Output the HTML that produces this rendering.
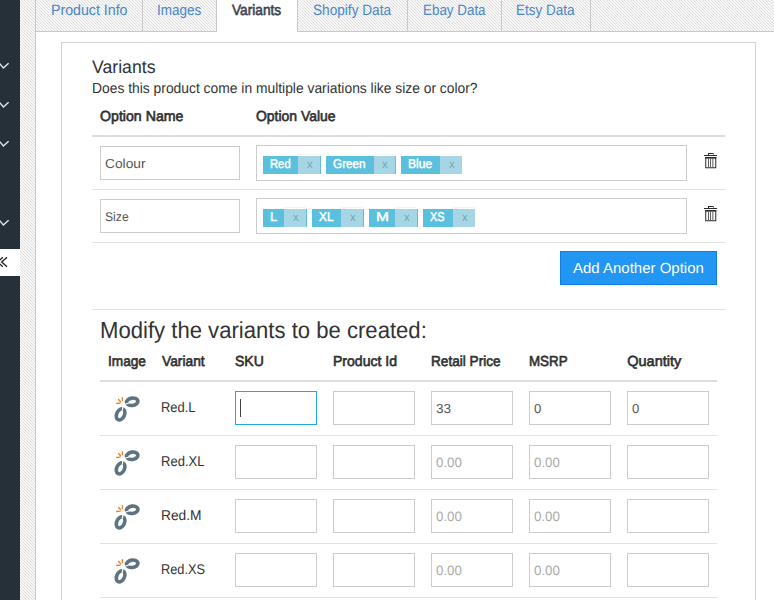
<!DOCTYPE html><html><head><meta charset="utf-8"><style>
html,body{margin:0;padding:0;width:774px;height:600px;overflow:hidden;}
body{position:relative;font-family:"Liberation Sans",sans-serif;color:#333;background:#ececec;}
.a{position:absolute;white-space:nowrap;}
.t{position:absolute;white-space:nowrap;text-rendering:geometricPrecision;}
.box{position:absolute;box-sizing:border-box;}
</style></head><body>
<svg class="a" style="left:0;top:0" width="774" height="600"><defs><pattern id="h" width="3" height="3" patternUnits="userSpaceOnUse"><rect width="3" height="3" fill="#f8f8f8"/><rect x="0" y="0" width="1" height="1" fill="#dedede"/><rect x="1" y="1" width="1" height="1" fill="#dedede"/><rect x="2" y="2" width="1" height="1" fill="#dedede"/></pattern></defs><rect width="774" height="600" fill="url(#h)"/></svg>
<div class="a" style="left:0;top:0;width:20px;height:600px;background:#263038"></div>
<svg class="a" style="left:0;top:62px" width="10" height="8"><polyline points="-0.3,1.6 3.4,6.0 8.6,1.2" fill="none" stroke="#e6e6e6" stroke-width="1.45"/></svg>
<svg class="a" style="left:0;top:101px" width="10" height="8"><polyline points="-0.3,1.6 3.4,6.0 8.6,1.2" fill="none" stroke="#e6e6e6" stroke-width="1.45"/></svg>
<svg class="a" style="left:0;top:140px" width="10" height="8"><polyline points="-0.3,1.6 3.4,6.0 8.6,1.2" fill="none" stroke="#e6e6e6" stroke-width="1.45"/></svg>
<svg class="a" style="left:0;top:219px" width="10" height="8"><polyline points="-0.3,1.6 3.4,6.0 8.6,1.2" fill="none" stroke="#e6e6e6" stroke-width="1.45"/></svg>
<div class="a" style="left:0;top:249px;width:20px;height:27px;background:#fff"></div>
<svg class="a" style="left:0;top:255px" width="12" height="14"><polyline points="2.8,2.3 -2.5,7 2.8,11.7" fill="none" stroke="#1c2228" stroke-width="1.35"/><polyline points="7,2.3 1.7,7 7,11.7" fill="none" stroke="#1c2228" stroke-width="1.35"/></svg>
<div class="box" style="left:35px;top:31px;width:739px;height:569px;background:#fff;border-left:1px solid #c9c9c9;border-top:1px solid #c9c9c9"></div>
<div class="box" style="left:35px;top:-5px;width:108px;height:37px;border:1px solid #c9c9c9;background:transparent"></div>
<div class="box" style="left:142px;top:-5px;width:75px;height:37px;border:1px solid #c9c9c9;background:transparent"></div>
<div class="box" style="left:216px;top:-5px;width:82px;height:37px;border:1px solid #c9c9c9;border-bottom:none;background:#fff"></div>
<div class="box" style="left:297px;top:-5px;width:111px;height:37px;border:1px solid #c9c9c9;background:transparent"></div>
<div class="box" style="left:407px;top:-5px;width:95px;height:37px;border:1px solid #c9c9c9;background:transparent"></div>
<div class="box" style="left:501px;top:-5px;width:90px;height:37px;border:1px solid #c9c9c9;background:transparent"></div>
<div class="t" style="left:51.04px;top:0px;font-size:15.01px;line-height:22px;font-weight:normal;color:#4a86c8;transform:scaleX(0.9460);transform-origin:0 0;">Product Info</div>
<div class="t" style="left:157.15px;top:0px;font-size:15.01px;line-height:22px;font-weight:normal;color:#4a86c8;transform:scaleX(0.9007);transform-origin:0 0;">Images</div>
<div class="t" style="left:232.24px;top:0px;font-size:15.01px;line-height:22px;font-weight:normal;color:#3d4450;transform:scaleX(0.9127);transform-origin:0 0;-webkit-text-stroke:0.6px #3d4450;">Variants</div>
<div class="t" style="left:312.88px;top:0px;font-size:15.01px;line-height:22px;font-weight:normal;color:#4a86c8;transform:scaleX(0.9090);transform-origin:0 0;">Shopify Data</div>
<div class="t" style="left:422.70px;top:0px;font-size:15.01px;line-height:22px;font-weight:normal;color:#4a86c8;transform:scaleX(0.8932);transform-origin:0 0;">Ebay Data</div>
<div class="t" style="left:516.49px;top:0px;font-size:15.01px;line-height:22px;font-weight:normal;color:#4a86c8;transform:scaleX(0.8992);transform-origin:0 0;">Etsy Data</div>
<div class="box" style="left:61px;top:42px;width:695px;height:600px;border:1px solid #d3d3d3;background:#fff"></div>
<div class="t" style="left:92.22px;top:54px;font-size:18.31px;line-height:26px;font-weight:normal;color:#333;transform:scaleX(0.9650);transform-origin:0 0;">Variants</div>
<div class="t" style="left:91.61px;top:79px;font-size:14.54px;line-height:21px;font-weight:normal;color:#333;transform:scaleX(0.9529);transform-origin:0 0;">Does this product come in multiple variations like size or color?</div>
<div class="t" style="left:100.33px;top:107px;font-size:14.54px;line-height:21px;font-weight:normal;color:#2f2f2f;transform:scaleX(0.9748);transform-origin:0 0;-webkit-text-stroke:0.6px #2f2f2f;">Option Name</div>
<div class="t" style="left:255.94px;top:107px;font-size:14.54px;line-height:21px;font-weight:normal;color:#2f2f2f;transform:scaleX(0.9597);transform-origin:0 0;-webkit-text-stroke:0.6px #2f2f2f;">Option Value</div>
<div class="a" style="left:92px;top:135px;width:633px;height:2px;background:#dddddd"></div>
<div class="a" style="left:92px;top:189px;width:633px;height:1px;background:#e2e2e2"></div>
<div class="a" style="left:92px;top:242px;width:633px;height:1px;background:#e2e2e2"></div>
<div class="box" style="left:100px;top:146px;width:140px;height:34px;border:1px solid #cccccc;background:#fff"></div>
<div class="t" style="left:104.70px;top:154px;font-size:13.08px;line-height:19px;font-weight:normal;color:#555;transform:scaleX(1.0518);transform-origin:0 0;">Colour</div>
<div class="box" style="left:256px;top:145px;width:431px;height:36px;border:1px solid #cccccc;background:#fff"></div>
<div class="box" style="left:100px;top:199px;width:140px;height:34px;border:1px solid #cccccc;background:#fff"></div>
<div class="t" style="left:104.85px;top:208px;font-size:12.65px;line-height:18px;font-weight:normal;color:#555;transform:scaleX(0.9629);transform-origin:0 0;">Size</div>
<div class="box" style="left:256px;top:198px;width:431px;height:36px;border:1px solid #cccccc;background:#fff"></div>
<div class="a" style="left:263px;top:156px;width:35px;height:18px;background:#5bc0de"></div>
<div class="a" style="left:298px;top:156px;width:22px;height:18px;background:#a6d6e5"></div>
<div class="a" style="left:298px;top:154px;width:22px;height:1px;background:#f6f3f3"></div>
<div class="a" style="left:320px;top:156px;width:1px;height:18px;background:#62bcdb"></div>
<div class="t" style="left:270.18px;top:155px;font-size:12.79px;line-height:18px;font-weight:normal;color:#fff;transform:scaleX(0.8801);transform-origin:0 0;-webkit-text-stroke:0.45px #fff;">Red</div>
<div class="t" style="left:306.67px;top:156px;font-size:11.7px;line-height:17px;font-weight:normal;color:#75a6b6;transform:scaleX(0.9655);transform-origin:0 0;">x</div>
<div class="a" style="left:326px;top:156px;width:48px;height:18px;background:#5bc0de"></div>
<div class="a" style="left:374px;top:156px;width:21px;height:18px;background:#a6d6e5"></div>
<div class="a" style="left:374px;top:154px;width:21px;height:1px;background:#f6f3f3"></div>
<div class="a" style="left:395px;top:156px;width:1px;height:18px;background:#62bcdb"></div>
<div class="t" style="left:333.31px;top:155px;font-size:12.79px;line-height:18px;font-weight:normal;color:#fff;transform:scaleX(0.9186);transform-origin:0 0;-webkit-text-stroke:0.45px #fff;">Green</div>
<div class="t" style="left:382.17px;top:156px;font-size:11.7px;line-height:17px;font-weight:normal;color:#75a6b6;transform:scaleX(0.9655);transform-origin:0 0;">x</div>
<div class="a" style="left:401px;top:156px;width:39px;height:18px;background:#5bc0de"></div>
<div class="a" style="left:440px;top:156px;width:22px;height:18px;background:#a6d6e5"></div>
<div class="a" style="left:440px;top:154px;width:22px;height:1px;background:#f6f3f3"></div>
<div class="t" style="left:408.00px;top:155px;font-size:12.79px;line-height:18px;font-weight:normal;color:#fff;transform:scaleX(0.9507);transform-origin:0 0;-webkit-text-stroke:0.45px #fff;">Blue</div>
<div class="t" style="left:448.67px;top:156px;font-size:11.7px;line-height:17px;font-weight:normal;color:#75a6b6;transform:scaleX(0.9655);transform-origin:0 0;">x</div>
<div class="a" style="left:263px;top:209px;width:21px;height:18px;background:#5bc0de"></div>
<div class="a" style="left:284px;top:209px;width:22px;height:18px;background:#a6d6e5"></div>
<div class="a" style="left:284px;top:207px;width:22px;height:1px;background:#f6f3f3"></div>
<div class="a" style="left:306px;top:209px;width:1px;height:18px;background:#62bcdb"></div>
<div class="t" style="left:270.04px;top:208px;font-size:12.79px;line-height:18px;font-weight:normal;color:#fff;transform:scaleX(1.0108);transform-origin:0 0;-webkit-text-stroke:0.45px #fff;">L</div>
<div class="t" style="left:292.67px;top:209px;font-size:11.7px;line-height:17px;font-weight:normal;color:#75a6b6;transform:scaleX(0.9655);transform-origin:0 0;">x</div>
<div class="a" style="left:312px;top:209px;width:29px;height:18px;background:#5bc0de"></div>
<div class="a" style="left:341px;top:209px;width:22px;height:18px;background:#a6d6e5"></div>
<div class="a" style="left:341px;top:207px;width:22px;height:1px;background:#f6f3f3"></div>
<div class="a" style="left:363px;top:209px;width:1px;height:18px;background:#62bcdb"></div>
<div class="t" style="left:319.43px;top:208px;font-size:12.79px;line-height:18px;font-weight:normal;color:#fff;transform:scaleX(0.9309);transform-origin:0 0;-webkit-text-stroke:0.45px #fff;">XL</div>
<div class="t" style="left:349.67px;top:209px;font-size:11.7px;line-height:17px;font-weight:normal;color:#75a6b6;transform:scaleX(0.9655);transform-origin:0 0;">x</div>
<div class="a" style="left:369px;top:209px;width:26px;height:18px;background:#5bc0de"></div>
<div class="a" style="left:395px;top:209px;width:22px;height:18px;background:#a6d6e5"></div>
<div class="a" style="left:395px;top:207px;width:22px;height:1px;background:#f6f3f3"></div>
<div class="a" style="left:417px;top:209px;width:1px;height:18px;background:#62bcdb"></div>
<div class="t" style="left:375.62px;top:208px;font-size:12.79px;line-height:18px;font-weight:normal;color:#fff;transform:scaleX(1.2155);transform-origin:0 0;-webkit-text-stroke:0.45px #fff;">M</div>
<div class="t" style="left:403.67px;top:209px;font-size:11.7px;line-height:17px;font-weight:normal;color:#75a6b6;transform:scaleX(0.9655);transform-origin:0 0;">x</div>
<div class="a" style="left:423px;top:209px;width:30px;height:18px;background:#5bc0de"></div>
<div class="a" style="left:453px;top:209px;width:22px;height:18px;background:#a6d6e5"></div>
<div class="a" style="left:453px;top:207px;width:22px;height:1px;background:#f6f3f3"></div>
<div class="t" style="left:430.16px;top:208px;font-size:12.79px;line-height:18px;font-weight:normal;color:#fff;transform:scaleX(0.8525);transform-origin:0 0;-webkit-text-stroke:0.45px #fff;">XS</div>
<div class="t" style="left:461.67px;top:209px;font-size:11.7px;line-height:17px;font-weight:normal;color:#75a6b6;transform:scaleX(0.9655);transform-origin:0 0;">x</div>
<svg class="a" style="left:703px;top:153px" width="16" height="16" viewBox="0 0 16 16">
<rect x="5.5" y="0.5" width="4.5" height="2" fill="none" stroke="#2a2a2a" stroke-width="1"/>
<rect x="1" y="2" width="13" height="1" fill="#2a2a2a"/>
<rect x="2.75" y="4.5" width="10" height="10.25" fill="none" stroke="#2a2a2a" stroke-width="1"/>
<rect x="2.25" y="4" width="11" height="1.6" fill="#2a2a2a"/>
<rect x="5" y="5.5" width="0.8" height="8.6" fill="#333"/><rect x="7.25" y="5.5" width="0.8" height="8.6" fill="#333"/><rect x="9.5" y="5.5" width="0.8" height="8.6" fill="#333"/>
</svg>
<svg class="a" style="left:703px;top:206px" width="16" height="16" viewBox="0 0 16 16">
<rect x="5.5" y="0.5" width="4.5" height="2" fill="none" stroke="#2a2a2a" stroke-width="1"/>
<rect x="1" y="2" width="13" height="1" fill="#2a2a2a"/>
<rect x="2.75" y="4.5" width="10" height="10.25" fill="none" stroke="#2a2a2a" stroke-width="1"/>
<rect x="2.25" y="4" width="11" height="1.6" fill="#2a2a2a"/>
<rect x="5" y="5.5" width="0.8" height="8.6" fill="#333"/><rect x="7.25" y="5.5" width="0.8" height="8.6" fill="#333"/><rect x="9.5" y="5.5" width="0.8" height="8.6" fill="#333"/>
</svg>
<div class="box" style="left:560px;top:251px;width:157px;height:34px;background:#2196f3;border:1px solid #0f7ee3"></div>
<div class="t" style="left:573.17px;top:259px;font-size:14.68px;line-height:21px;font-weight:normal;color:#fff;transform:scaleX(1.0214);transform-origin:0 0;">Add Another Option</div>
<div class="a" style="left:92px;top:309px;width:633px;height:1px;background:#e2e2e2"></div>
<div class="t" style="left:99.69px;top:314px;font-size:23.26px;line-height:33px;font-weight:normal;color:#333;transform:scaleX(0.9506);transform-origin:0 0;">Modify the variants to be created:</div>
<div class="t" style="left:107.74px;top:352px;font-size:14.54px;line-height:21px;font-weight:normal;color:#2f2f2f;transform:scaleX(0.9395);transform-origin:0 0;-webkit-text-stroke:0.6px #2f2f2f;">Image</div>
<div class="t" style="left:161.64px;top:352px;font-size:14.54px;line-height:21px;font-weight:normal;color:#2f2f2f;transform:scaleX(0.9477);transform-origin:0 0;-webkit-text-stroke:0.6px #2f2f2f;">Variant</div>
<div class="t" style="left:234.76px;top:352px;font-size:14.54px;line-height:21px;font-weight:normal;color:#2f2f2f;transform:scaleX(0.9639);transform-origin:0 0;-webkit-text-stroke:0.6px #2f2f2f;">SKU</div>
<div class="t" style="left:332.65px;top:352px;font-size:14.54px;line-height:21px;font-weight:normal;color:#2f2f2f;transform:scaleX(0.9666);transform-origin:0 0;-webkit-text-stroke:0.6px #2f2f2f;">Product Id</div>
<div class="t" style="left:430.98px;top:352px;font-size:14.54px;line-height:21px;font-weight:normal;color:#2f2f2f;transform:scaleX(0.9365);transform-origin:0 0;-webkit-text-stroke:0.6px #2f2f2f;">Retail Price</div>
<div class="t" style="left:529.10px;top:352px;font-size:14.54px;line-height:21px;font-weight:normal;color:#2f2f2f;transform:scaleX(0.9189);transform-origin:0 0;-webkit-text-stroke:0.6px #2f2f2f;">MSRP</div>
<div class="t" style="left:627.21px;top:352px;font-size:14.54px;line-height:21px;font-weight:normal;color:#2f2f2f;-webkit-text-stroke:0.6px #2f2f2f;">Quantity</div>
<div class="a" style="left:100px;top:380px;width:617px;height:2px;background:#dddddd"></div>
<div class="a" style="left:100px;top:435px;width:617px;height:1px;background:#e2e2e2"></div>
<svg class="a" style="left:110px;top:392px" width="34" height="32" viewBox="0 0 34 32">
<ellipse cx="22.2" cy="9.8" rx="5.75" ry="3.7" transform="rotate(-8 22.2 9.8)" fill="none" stroke="#5e7380" stroke-width="3.6"/>
<ellipse cx="10.6" cy="22.4" rx="3.9" ry="5.85" transform="rotate(25 10.6 22.4)" fill="none" stroke="#5e7380" stroke-width="3.6"/>
<path d="M14.2,12.6 L20.5,10.6" stroke="#fff" stroke-width="1.1"/>
<path d="M12.9,14.6 L11.8,20.8" stroke="#fff" stroke-width="1.1"/>
<path d="M6.7,11.5 L9.9,11.2 M8.6,7.5 L10.6,9.8 M12.3,5.6 L12.5,8.5" stroke="#f47b20" stroke-width="1.3" stroke-linecap="round"/>
</svg>
<div class="t" style="left:160.64px;top:397px;font-size:14.1px;line-height:20px;font-weight:normal;color:#333;transform:scaleX(0.9167);transform-origin:0 0;">Red.L</div>
<div class="box" style="left:235px;top:391px;width:82px;height:34px;border:1px solid #1ea7ea;background:#fff"></div>
<div class="box" style="left:333px;top:391px;width:82px;height:34px;border:1px solid #cccccc;background:#fff"></div>
<div class="box" style="left:431px;top:391px;width:82px;height:34px;border:1px solid #cccccc;background:#fff"></div>
<div class="box" style="left:529px;top:391px;width:82px;height:34px;border:1px solid #cccccc;background:#fff"></div>
<div class="box" style="left:627px;top:391px;width:82px;height:34px;border:1px solid #cccccc;background:#fff"></div>
<div class="a" style="left:240px;top:399px;width:1px;height:18px;background:#444"></div>
<div class="t" style="left:435.88px;top:399px;font-size:13.08px;line-height:19px;font-weight:normal;color:#555;transform:scaleX(1.0389);transform-origin:0 0;">33</div>
<div class="t" style="left:533.89px;top:399px;font-size:13.08px;line-height:19px;font-weight:normal;color:#555;">0</div>
<div class="t" style="left:631.89px;top:399px;font-size:13.08px;line-height:19px;font-weight:normal;color:#555;">0</div>
<div class="a" style="left:100px;top:489px;width:617px;height:1px;background:#e2e2e2"></div>
<svg class="a" style="left:110px;top:446px" width="34" height="32" viewBox="0 0 34 32">
<ellipse cx="22.2" cy="9.8" rx="5.75" ry="3.7" transform="rotate(-8 22.2 9.8)" fill="none" stroke="#5e7380" stroke-width="3.6"/>
<ellipse cx="10.6" cy="22.4" rx="3.9" ry="5.85" transform="rotate(25 10.6 22.4)" fill="none" stroke="#5e7380" stroke-width="3.6"/>
<path d="M14.2,12.6 L20.5,10.6" stroke="#fff" stroke-width="1.1"/>
<path d="M12.9,14.6 L11.8,20.8" stroke="#fff" stroke-width="1.1"/>
<path d="M6.7,11.5 L9.9,11.2 M8.6,7.5 L10.6,9.8 M12.3,5.6 L12.5,8.5" stroke="#f47b20" stroke-width="1.3" stroke-linecap="round"/>
</svg>
<div class="t" style="left:160.63px;top:451px;font-size:14.1px;line-height:20px;font-weight:normal;color:#333;transform:scaleX(0.9250);transform-origin:0 0;">Red.XL</div>
<div class="box" style="left:235px;top:445px;width:82px;height:34px;border:1px solid #cccccc;background:#fff"></div>
<div class="box" style="left:333px;top:445px;width:82px;height:34px;border:1px solid #cccccc;background:#fff"></div>
<div class="box" style="left:431px;top:445px;width:82px;height:34px;border:1px solid #cccccc;background:#fff"></div>
<div class="box" style="left:529px;top:445px;width:82px;height:34px;border:1px solid #cccccc;background:#fff"></div>
<div class="box" style="left:627px;top:445px;width:82px;height:34px;border:1px solid #cccccc;background:#fff"></div>
<div class="t" style="left:435.88px;top:453px;font-size:13.52px;line-height:19px;font-weight:normal;color:#aaa;transform:scaleX(0.9858);transform-origin:0 0;">0.00</div>
<div class="t" style="left:533.88px;top:453px;font-size:13.52px;line-height:19px;font-weight:normal;color:#aaa;transform:scaleX(0.9858);transform-origin:0 0;">0.00</div>
<div class="a" style="left:100px;top:543px;width:617px;height:1px;background:#e2e2e2"></div>
<svg class="a" style="left:110px;top:500px" width="34" height="32" viewBox="0 0 34 32">
<ellipse cx="22.2" cy="9.8" rx="5.75" ry="3.7" transform="rotate(-8 22.2 9.8)" fill="none" stroke="#5e7380" stroke-width="3.6"/>
<ellipse cx="10.6" cy="22.4" rx="3.9" ry="5.85" transform="rotate(25 10.6 22.4)" fill="none" stroke="#5e7380" stroke-width="3.6"/>
<path d="M14.2,12.6 L20.5,10.6" stroke="#fff" stroke-width="1.1"/>
<path d="M12.9,14.6 L11.8,20.8" stroke="#fff" stroke-width="1.1"/>
<path d="M6.7,11.5 L9.9,11.2 M8.6,7.5 L10.6,9.8 M12.3,5.6 L12.5,8.5" stroke="#f47b20" stroke-width="1.3" stroke-linecap="round"/>
</svg>
<div class="t" style="left:160.57px;top:505px;font-size:14.1px;line-height:20px;font-weight:normal;color:#333;transform:scaleX(0.9767);transform-origin:0 0;">Red.M</div>
<div class="box" style="left:235px;top:499px;width:82px;height:34px;border:1px solid #cccccc;background:#fff"></div>
<div class="box" style="left:333px;top:499px;width:82px;height:34px;border:1px solid #cccccc;background:#fff"></div>
<div class="box" style="left:431px;top:499px;width:82px;height:34px;border:1px solid #cccccc;background:#fff"></div>
<div class="box" style="left:529px;top:499px;width:82px;height:34px;border:1px solid #cccccc;background:#fff"></div>
<div class="box" style="left:627px;top:499px;width:82px;height:34px;border:1px solid #cccccc;background:#fff"></div>
<div class="t" style="left:435.88px;top:507px;font-size:13.52px;line-height:19px;font-weight:normal;color:#aaa;transform:scaleX(0.9858);transform-origin:0 0;">0.00</div>
<div class="t" style="left:533.88px;top:507px;font-size:13.52px;line-height:19px;font-weight:normal;color:#aaa;transform:scaleX(0.9858);transform-origin:0 0;">0.00</div>
<div class="a" style="left:100px;top:597px;width:617px;height:1px;background:#e2e2e2"></div>
<svg class="a" style="left:110px;top:554px" width="34" height="32" viewBox="0 0 34 32">
<ellipse cx="22.2" cy="9.8" rx="5.75" ry="3.7" transform="rotate(-8 22.2 9.8)" fill="none" stroke="#5e7380" stroke-width="3.6"/>
<ellipse cx="10.6" cy="22.4" rx="3.9" ry="5.85" transform="rotate(25 10.6 22.4)" fill="none" stroke="#5e7380" stroke-width="3.6"/>
<path d="M14.2,12.6 L20.5,10.6" stroke="#fff" stroke-width="1.1"/>
<path d="M12.9,14.6 L11.8,20.8" stroke="#fff" stroke-width="1.1"/>
<path d="M6.7,11.5 L9.9,11.2 M8.6,7.5 L10.6,9.8 M12.3,5.6 L12.5,8.5" stroke="#f47b20" stroke-width="1.3" stroke-linecap="round"/>
</svg>
<div class="t" style="left:160.65px;top:559px;font-size:14.1px;line-height:20px;font-weight:normal;color:#333;transform:scaleX(0.9041);transform-origin:0 0;">Red.XS</div>
<div class="box" style="left:235px;top:553px;width:82px;height:34px;border:1px solid #cccccc;background:#fff"></div>
<div class="box" style="left:333px;top:553px;width:82px;height:34px;border:1px solid #cccccc;background:#fff"></div>
<div class="box" style="left:431px;top:553px;width:82px;height:34px;border:1px solid #cccccc;background:#fff"></div>
<div class="box" style="left:529px;top:553px;width:82px;height:34px;border:1px solid #cccccc;background:#fff"></div>
<div class="box" style="left:627px;top:553px;width:82px;height:34px;border:1px solid #cccccc;background:#fff"></div>
<div class="t" style="left:435.88px;top:561px;font-size:13.52px;line-height:19px;font-weight:normal;color:#aaa;transform:scaleX(0.9858);transform-origin:0 0;">0.00</div>
<div class="t" style="left:533.88px;top:561px;font-size:13.52px;line-height:19px;font-weight:normal;color:#aaa;transform:scaleX(0.9858);transform-origin:0 0;">0.00</div>
</body></html>
